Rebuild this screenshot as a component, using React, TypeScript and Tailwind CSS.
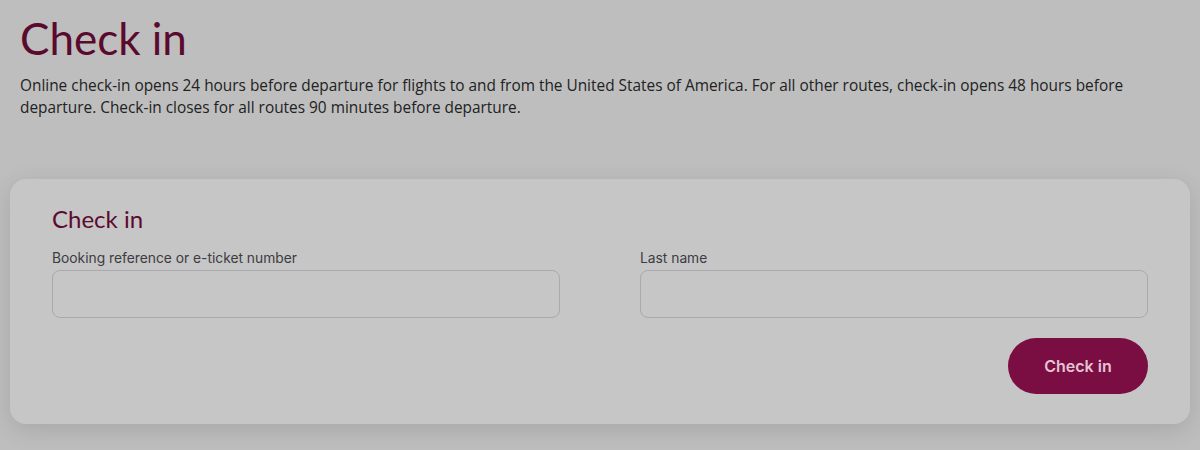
export default function App() {
  return (
    <div className="min-h-screen w-full bg-[#bebebe] pt-[12px]" style={{ fontFamily: "Lato, 'Open Sans', sans-serif" }}>
      <div className="px-5">
        <h1 className="text-[44px] leading-[52px] text-[#5a0a2c]">Check in</h1>
        <p className="mt-[11px] text-[15.4px] leading-[22px] text-[#222]" style={{ fontFamily: "'Open Sans', sans-serif" }}>
          Online check-in opens 24 hours before departure for flights to and from the United States of America. For all other routes, check-in opens 48 hours before departure. Check-in closes for all routes 90 minutes before departure.
        </p>
      </div>
      <div className="mx-[10px] mt-[60px] rounded-2xl bg-[#c6c6c6] px-[42px] pt-[25px] pb-[30px] shadow-[0_6px_24px_rgba(0,0,0,0.12)]">
        <h2 className="text-[24px] leading-[30px] text-[#5c0a30]">Check in</h2>
        <div className="mt-[15px] grid grid-cols-2 gap-x-[80px]">
          <label className="flex flex-col" style={{ fontFamily: "Inter, Roboto, sans-serif" }}>
            <span className="text-[13.8px] leading-[18px] text-[#3c3c42]">Booking reference or e-ticket number</span>
            <input className="mt-[3px] h-[48px] rounded-lg border border-[#a9a9b0] bg-transparent px-3 outline-none" />
          </label>
          <label className="flex flex-col" style={{ fontFamily: "Inter, Roboto, sans-serif" }}>
            <span className="text-[13.8px] leading-[18px] text-[#3c3c42]">Last name</span>
            <input className="mt-[3px] h-[48px] rounded-lg border border-[#a9a9b0] bg-transparent px-3 outline-none" />
          </label>
        </div>
        <div className="mt-[20px] flex justify-end">
          <button className="h-[56px] w-[140px] rounded-full bg-[#7a0e42] text-[16px] font-semibold text-[#e4c4d4]" style={{ fontFamily: "Inter, Roboto, sans-serif" }}>
            Check in
          </button>
        </div>
      </div>
    </div>
  );
}
